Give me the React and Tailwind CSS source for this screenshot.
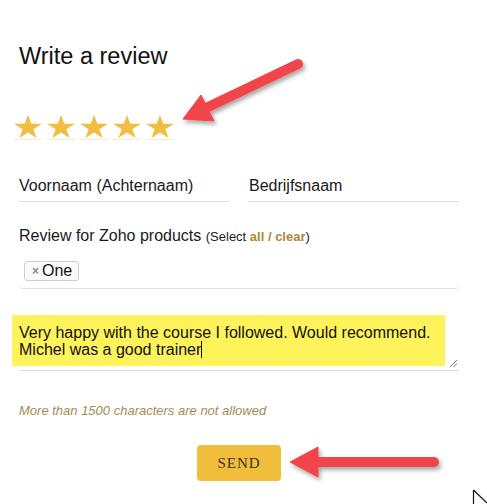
import React from "react";

const STAR = "14,0 17.3,8.78 28,8.78 19.34,14.21 22.66,23 14,17.57 5.34,23 8.66,14.21 0,8.78 10.7,8.78";

function Star() {
  return (
    <div className="flex flex-col">
      <svg width="28" height="23" viewBox="0 0 28 23">
        <polygon points={STAR} fill="#f1bd43" />
      </svg>
      <div className="mt-[1px] h-px bg-[#f6ead0]" />
    </div>
  );
}

function Arrows() {
  return (
    <svg className="absolute inset-0 pointer-events-none" width="487" height="504" viewBox="0 0 487 504">
      <defs>
        <filter id="sh" x="-20%" y="-50%" width="140%" height="200%">
          <feDropShadow dx="2" dy="3" stdDeviation="2" floodColor="#000" floodOpacity="0.35" />
        </filter>
      </defs>
      <g filter="url(#sh)" fill="#f2454b" stroke="#f2454b">
        {/* top arrow pointing at stars */}
        <line x1="298" y1="64" x2="204" y2="109" strokeWidth="10" strokeLinecap="round" />
        <polygon points="183,119 201,95 214,121" strokeWidth="1" strokeLinejoin="round" />
        {/* bottom arrow pointing at send */}
        <line x1="314" y1="462" x2="434" y2="462" strokeWidth="10" strokeLinecap="round" />
        <polygon points="290,462 318,447 318,477" strokeWidth="1" strokeLinejoin="round" />
      </g>
      {/* mouse pointer */}
      <path d="M473.5 490 L473.5 504 M473.5 490 L487 503" stroke="#111" strokeWidth="1.2" fill="none" />
    </svg>
  );
}

export default function App() {
  return (
    <div className="relative w-[487px] h-[504px] overflow-hidden bg-white font-['Liberation_Sans',Arial,sans-serif] text-[#1a1a1a]">
      <div className="w-[440px] ml-[19px]">
        <h2 className="mt-[42px] text-[23.5px] leading-[28px] text-[#111]">Write a review</h2>

        {/* Rating */}
        <div className="mt-[45px] -ml-[5px] flex gap-[5px]">
          <Star />
          <Star />
          <Star />
          <Star />
          <Star />
        </div>

        {/* Name fields */}
        <div className="mt-[37px] flex gap-[20px]">
          <div className="w-[210px] border-b border-[#dcdcdc] pb-[6px] text-[16px] leading-[18px]">Voornaam (Achternaam)</div>
          <div className="w-[210px] border-b border-[#dcdcdc] pb-[6px] text-[16px] leading-[18px]">Bedrijfsnaam</div>
        </div>

        {/* Products */}
        <div className="mt-[25px] text-[16px] leading-[18px]">
          Review for Zoho products{" "}
          <span className="text-[13px]">
            (Select <b className="text-[#a98a3c]">all / clear</b>)
          </span>
        </div>
        <div className="mt-[15px] flex pb-[7px] border-b border-[#e2e2e2] rounded-b-[4px]">
          <span className="ml-[5px] flex items-center h-[20px] pl-[7px] pr-[6px] border border-[#cfcfcf] rounded-[3px] bg-[#fafafa]">
            <span className="text-[12px] font-bold text-[#8a8a8a] mr-[3px] leading-none">×</span>
            <span className="text-[16px] leading-[18px] text-[#111]">One</span>
          </span>
        </div>

        {/* Review text */}
        <div className="relative mt-[26px] pb-[4px] border-b border-[#dcdcdc]">
          <div className="-ml-[7px] w-[433px] pl-[7px] pt-[9px] pb-[8px] bg-[#fff35c] text-[16px] leading-[17px] text-[#111]">
            Very happy with the course I followed. Would recommend.
            <br />
            Michel was a good trainer
            <span className="inline-block w-px h-[17px] bg-black align-top" />
          </div>
          <svg className="absolute right-[1px] bottom-[2px]" width="9" height="9" viewBox="0 0 9 9">
            <path d="M1 8 L8 1 M4.5 8 L8 4.5" stroke="#777" strokeWidth="1" />
          </svg>
        </div>

        <p className="mt-[32px] text-[13px] leading-[15px] italic text-[#a38c55]">More than 1500 characters are not allowed</p>

        <div className="mt-[27px] flex justify-center">
          <button className="w-[84px] h-[36px] rounded-[4px] bg-[#f0bd3d] font-['Liberation_Serif',serif] text-[15px] tracking-[1px] text-[#3b3320]">
            SEND
          </button>
        </div>
      </div>

      <Arrows />
    </div>
  );
}
